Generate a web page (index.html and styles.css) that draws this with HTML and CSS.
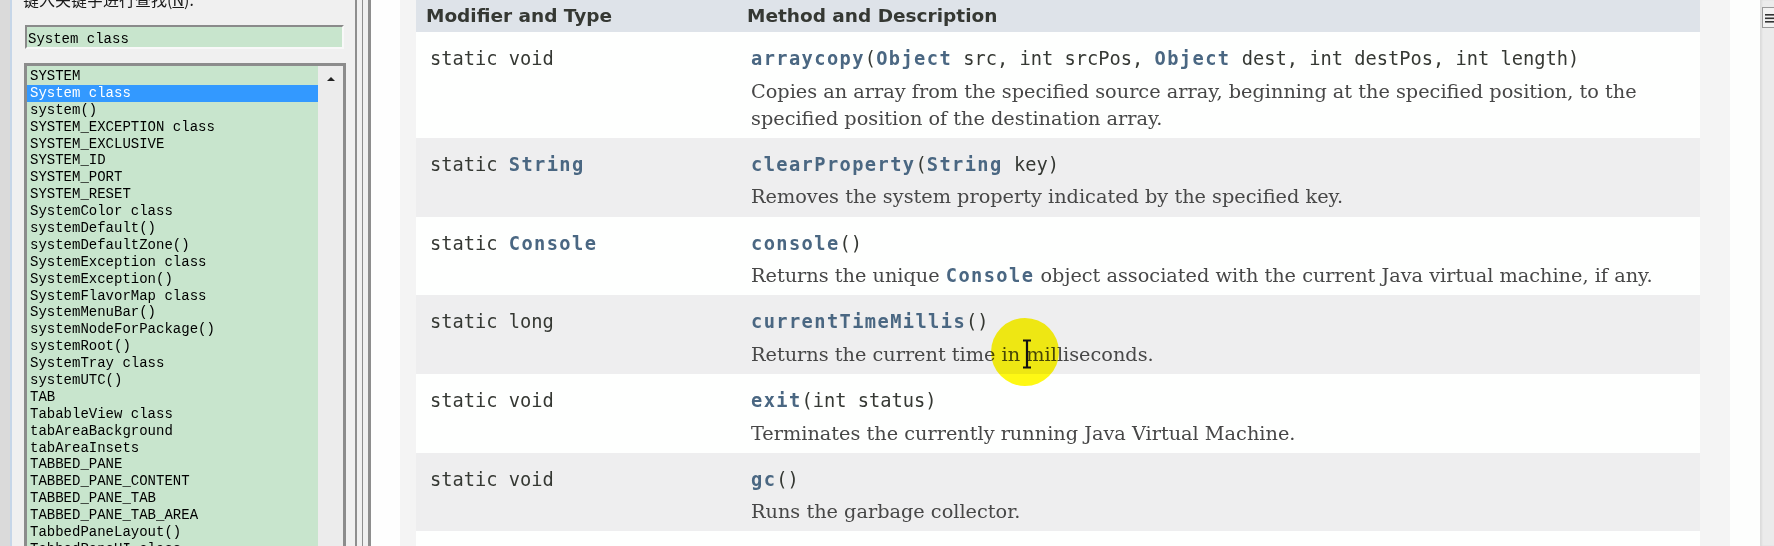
FILE: index.html
```html
<!DOCTYPE html>
<html lang="zh-CN">
<head>
<meta charset="utf-8">
<title>System (Java Platform SE)</title>
<link rel="stylesheet" href="styles.css">
</head>
<body>
<div class="screen">
  <div class="frame-edge"></div>

  <aside class="index-panel">
    <div class="index-label">键入关键字进行查找(<u>N</u>):</div>
    <div class="index-input">System class</div>
    <div class="index-list">
      <ul class="items">
        <li>SYSTEM</li>
        <li class="selected">System class</li>
        <li>system()</li>
        <li>SYSTEM_EXCEPTION class</li>
        <li>SYSTEM_EXCLUSIVE</li>
        <li>SYSTEM_ID</li>
        <li>SYSTEM_PORT</li>
        <li>SYSTEM_RESET</li>
        <li>SystemColor class</li>
        <li>systemDefault()</li>
        <li>systemDefaultZone()</li>
        <li>SystemException class</li>
        <li>SystemException()</li>
        <li>SystemFlavorMap class</li>
        <li>SystemMenuBar()</li>
        <li>systemNodeForPackage()</li>
        <li>systemRoot()</li>
        <li>SystemTray class</li>
        <li>systemUTC()</li>
        <li>TAB</li>
        <li>TabableView class</li>
        <li>tabAreaBackground</li>
        <li>tabAreaInsets</li>
        <li>TABBED_PANE</li>
        <li>TABBED_PANE_CONTENT</li>
        <li>TABBED_PANE_TAB</li>
        <li>TABBED_PANE_TAB_AREA</li>
        <li>TabbedPaneLayout()</li>
        <li>TabbedPaneUI class</li>
      </ul>
      <div class="vscroll"><span class="arrow-up"></span></div>
    </div>
  </aside>

  <div class="splitter"><span class="ln ln-a"></span><span class="ln ln-b"></span><span class="ln ln-c"></span></div>
  <div class="gutter"></div>

  <main class="content">
    <table class="summary">
      <colgroup><col class="c1"><col class="c2"></colgroup>
      <thead>
        <tr><th>Modifier and Type</th><th>Method and Description</th></tr>
      </thead>
      <tbody>
        <tr class="plain">
          <td><code class="code">static void</code></td>
          <td>
            <div class="code"><span class="link">arraycopy</span>(<span class="link">Object</span> src, int srcPos, <span class="link">Object</span> dest, int destPos, int length)</div>
            <div class="block">Copies an array from the specified source array, beginning at the specified position, to the<br>specified position of the destination array.</div>
          </td>
        </tr>
        <tr class="alt">
          <td><code class="code">static <span class="link">String</span></code></td>
          <td>
            <div class="code"><span class="link">clearProperty</span>(<span class="link">String</span> key)</div>
            <div class="block">Removes the system property indicated by the specified key.</div>
          </td>
        </tr>
        <tr class="plain">
          <td><code class="code">static <span class="link">Console</span></code></td>
          <td>
            <div class="code"><span class="link">console</span>()</div>
            <div class="block">Returns the unique <code class="inline-code link">Console</code> object associated with the current Java virtual machine, if any.</div>
          </td>
        </tr>
        <tr class="alt">
          <td><code class="code">static long</code></td>
          <td>
            <div class="code"><span class="link">currentTimeMillis</span>()</div>
            <div class="block">Returns the current time in milliseconds.</div>
          </td>
        </tr>
        <tr class="plain">
          <td><code class="code">static void</code></td>
          <td>
            <div class="code"><span class="link">exit</span>(int status)</div>
            <div class="block">Terminates the currently running Java Virtual Machine.</div>
          </td>
        </tr>
        <tr class="alt">
          <td><code class="code">static void</code></td>
          <td>
            <div class="code"><span class="link">gc</span>()</div>
            <div class="block">Runs the garbage collector.</div>
          </td>
        </tr>
        <tr class="plain">
          <td><code class="code">static void</code></td>
          <td>
            <div class="code"><span class="link">getenv</span>()</div>
            <div class="block">Returns an unmodifiable string map view of the current system environment.</div>
          </td>
        </tr>
      </tbody>
    </table>
  </main>

  <div class="right-white"></div>
  <div class="right-scroll">
    <div class="mini-btn">
      <svg width="12" height="12" viewBox="0 0 12 12"><rect x="2" y="2" width="10" height="1.6" fill="#333"/><rect x="2" y="5.5" width="10" height="1.6" fill="#333"/><rect x="2" y="9" width="10" height="1.6" fill="#333"/></svg>
    </div>
  </div>

  <div class="spot"></div>
  <svg class="ibeam" width="12" height="30" viewBox="0 0 12 30">
    <path d="M2 1.5 H10 M6 1.5 V28.5 M2 28.5 H10" stroke="#111" stroke-width="2.2" fill="none"/>
  </svg>
</div>
</body>
</html>
```
FILE: styles.css
```css
html, body {
  margin: 0;
  padding: 0;
  background: #f0f0f0;
}
.screen {
  position: relative;
  display: flex;
  width: 1774px;
  height: 546px;
  overflow: hidden;
}

/* window frame edge */
.frame-edge {
  flex: 0 0 10px;
  background: #dadada;
  border-right: 2px solid #c6d6e8;
}

/* index search panel */
.index-panel {
  flex: 0 0 343px;
  display: flex;
  flex-direction: column;
  background: #f0f0f0;
}
.index-label {
  margin: -11px 0 0 11px;
  font: 16px/20px "Noto Sans CJK SC", sans-serif;
  color: #1a1a1a;
  white-space: nowrap;
}
.index-input {
  margin: 16px 0 0 13px;
  width: 314px;
  height: 18px;
  padding: 2px 0 0 1px;
  border-style: solid;
  border-width: 2px;
  border-color: #8a8a8a #f8f8f8 #f8f8f8 #8a8a8a;
  background: #c8e5cd;
  font: 14px/20px "Liberation Mono", monospace;
  color: #000;
  white-space: nowrap;
}
.index-list {
  margin: 14px 0 0 12px;
  width: 316px;
  flex: 1 0 auto;
  display: flex;
  border-style: solid;
  border-width: 3px 3px 0 3px;
  border-color: #8c8c8c;
  box-shadow: inset 1px 1px 0 #c8c8c8;
}
.items {
  list-style: none;
  margin: 0;
  padding: 2px 0 0 0;
  flex: 0 0 291px;
  background: #c8e5cd;
  font: 14px/16.9px "Liberation Mono", monospace;
  color: #000;
}
.items li {
  padding-left: 3px;
  white-space: nowrap;
  height: 16.9px;
}
.items li.selected {
  background: #3399ff;
  color: #ffffff;
}
.vscroll {
  flex: 1 1 auto;
  background: #ececec;
  display: flex;
  justify-content: center;
  padding-top: 11px;
}
.arrow-up {
  width: 0;
  height: 0;
  border-left: 4px solid transparent;
  border-right: 4px solid transparent;
  border-bottom: 4px solid #222;
}

/* splitter */
.splitter {
  flex: 0 0 16px;
  display: flex;
  background: #f0f0f0;
}
.ln { display: block; background: #8e8e8e; }
.ln-a { width: 2px; margin-right: 5px; }
.ln-b { width: 1px; margin-right: 5px; }
.ln-c { width: 3px; }

.gutter {
  flex: 0 0 29px;
  background: #fefefe;
}

/* javadoc content */
.content {
  flex: 0 0 1314px;
  padding-left: 16px;
  background: #f4f4f4;
}
.summary {
  border-collapse: collapse;
  border-spacing: 0;
  table-layout: fixed;
  width: 1284px;
}
.summary col.c1 { width: 321px; }
.summary col.c2 { width: 963px; }
.summary th {
  background: #dee3e9;
  height: 32px;
  padding: 0 0 0 10px;
  text-align: left;
  font: bold 18.5px/32px "DejaVu Sans", sans-serif;
  color: #353833;
  white-space: nowrap;
}
.summary td {
  vertical-align: top;
  padding: 13px 10px 5.9px 14px;
}
.summary tr.plain td { background: #fefffe; }
.summary tr.alt td { background: #eeeeef; }
.code {
  display: block;
  font: 18.7px/27px "DejaVu Sans Mono", monospace;
  color: #353833;
  white-space: nowrap;
}
.link {
  color: #4a6782;
  font-weight: bold;
  letter-spacing: 1.4px;
}
.block {
  margin-top: 5.5px;
  font: 19.3px/27.3px "DejaVu Serif", serif;
  color: #474747;
  white-space: nowrap;
}
.inline-code {
  font-family: "DejaVu Sans Mono", monospace;
  font-size: 18.7px;
}

/* right side */
.right-white {
  flex: 0 0 30px;
  background: #fdfefd;
}
.right-scroll {
  flex: 0 0 14px;
  background: #ebebeb;
  padding-top: 7px;
  box-shadow: inset 2px 0 2px #dcdcdc;
}
.mini-btn {
  margin-left: 2px;
  width: 14px;
  height: 19px;
  border: 1px solid #9a9a9a;
  border-right: 0;
  background: #f2f2f2;
  display: flex;
  align-items: center;
}

/* mouse highlight overlay */
.spot {
  position: absolute;
  left: 991px;
  top: 318px;
  width: 68px;
  height: 68px;
  border-radius: 50%;
  background: radial-gradient(circle, rgb(255,248,20) 0%, rgb(255,248,20) 80%, rgba(255,248,20,0) 100%);
  mix-blend-mode: multiply;
}
.ibeam {
  position: absolute;
  left: 1021px;
  top: 339px;
}
```
